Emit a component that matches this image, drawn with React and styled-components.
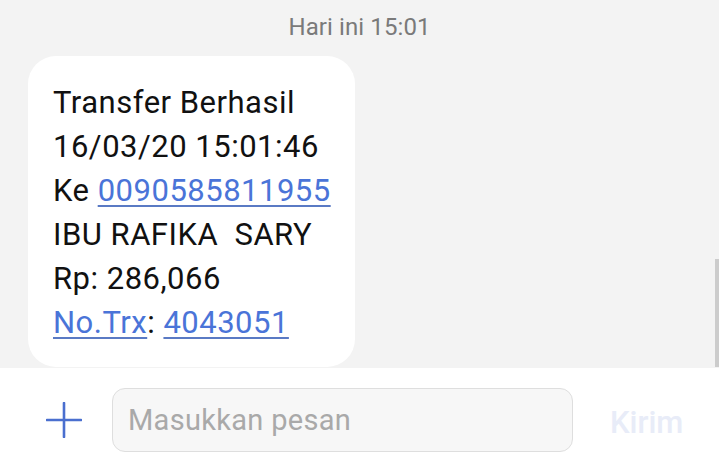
import React from 'react'
import styled, { createGlobalStyle } from 'styled-components'

const Global = createGlobalStyle`
  html, body {
    margin: 0;
    padding: 0;
    background: #ffffff;
    font-family: Roboto, "Noto Sans", sans-serif;
  }
`;

export default function App() {
  return (
    <>
      <Global />
      <Screen>
        <Chat>
          <DateLabel>Hari ini 15:01</DateLabel>
          <Bubble>
            <Line>Transfer Berhasil</Line>
            <Line>16/03/20 15:01:46</Line>
            <Line>Ke <Link>0090585811955</Link></Line>
            <Line>IBU RAFIKA&nbsp; SARY</Line>
            <Line>Rp: 286,066</Line>
            <Line><Link>No.Trx</Link>: <Link>4043051</Link></Line>
          </Bubble>
          <ScrollThumb />
        </Chat>
        <Composer>
          <AddButton aria-label="Tambah">
            <svg width="36" height="36" viewBox="0 0 36 36">
              <path d="M18 1 V35 M1 18 H35" stroke="#4a6fcf" strokeWidth="2.6" strokeLinecap="round" fill="none" />
            </svg>
          </AddButton>
          <Input placeholder="Masukkan pesan" />
          <SendButton>Kirim</SendButton>
        </Composer>
      </Screen>
    </>
  )
}

const Screen = styled.div`
  display: flex;
  flex-direction: column;
  width: 719px;
  height: 471px;
  overflow: hidden;
`;

const Chat = styled.div`
  position: relative;
  flex: 0 0 368px;
  background: #f3f3f3;
  padding: 0 28px;
  box-sizing: border-box;
  display: flex;
  flex-direction: column;
  align-items: flex-start;
`;

const DateLabel = styled.div`
  align-self: center;
  margin-top: 13px;
  height: 43px;
  font-size: 24px;
  line-height: 28px;
  color: #7a7a7a;
  letter-spacing: 0.1px;
`;

const Bubble = styled.div`
  background: #ffffff;
  border-radius: 28px;
  padding: 25px 24px 22px 25px;
  color: #111111;
`;

const Line = styled.div`
  font-size: 31px;
  line-height: 44px;
  letter-spacing: 0.5px;
  white-space: nowrap;
`;

const Link = styled.span`
  color: #4a74d8;
  text-decoration: underline;
  text-decoration-color: #5a7ac4;
  text-decoration-thickness: 1.5px;
  text-underline-offset: 4px;
`;

const ScrollThumb = styled.div`
  position: absolute;
  right: 0;
  top: 259px;
  width: 4px;
  height: 108px;
  background: #cccccc;
`;

const Composer = styled.div`
  flex: 1;
  display: flex;
  align-items: center;
  padding: 0 0 0 46px;
  background: #ffffff;
`;

const AddButton = styled.button`
  width: 36px;
  height: 36px;
  padding: 0;
  margin-right: 30px;
  border: none;
  background: none;
  display: flex;
  align-items: center;
  justify-content: center;
`;

const Input = styled.input`
  box-sizing: border-box;
  width: 461px;
  height: 64px;
  border: 1px solid #dedede;
  border-radius: 13px;
  background: #f7f7f7;
  padding: 0 15px;
  font-family: Roboto, sans-serif;
  font-size: 29px;
  letter-spacing: 0.3px;
  outline: none;
  &::placeholder {
    color: #a9a9a9;
  }
`;

const SendButton = styled.button`
  margin: 6px 0 0 37px;
  border: none;
  background: none;
  padding: 0;
  font-family: Roboto, sans-serif;
  font-size: 31px;
  font-weight: 500;
  color: #e8ecf8;
`;
